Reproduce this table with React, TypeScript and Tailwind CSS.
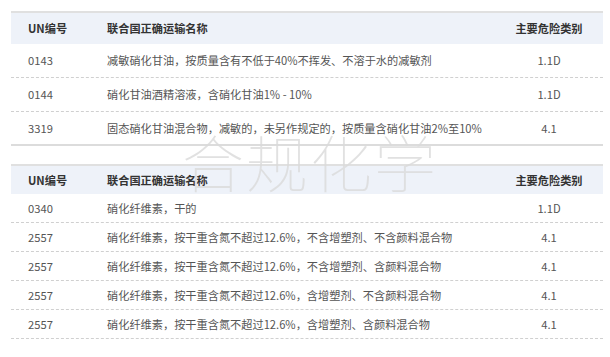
const font = { fontFamily: '"Noto Sans CJK SC", "Liberation Sans", sans-serif' };

type Row = { un: string; name: string; cls: string };

const first: Row[] = [
  { un: "0143", name: "减敏硝化甘油，按质量含有不低于40%不挥发、不溶于水的减敏剂", cls: "1.1D" },
  { un: "0144", name: "硝化甘油酒精溶液，含硝化甘油1% - 10%", cls: "1.1D" },
  { un: "3319", name: "固态硝化甘油混合物，减敏的，未另作规定的，按质量含硝化甘油2%至10%", cls: "4.1" },
];

const second: Row[] = [
  { un: "0340", name: "硝化纤维素，干的", cls: "1.1D" },
  { un: "2557", name: "硝化纤维素，按干重含氮不超过12.6%，不含增塑剂、不含颜料混合物", cls: "4.1" },
  { un: "2557", name: "硝化纤维素，按干重含氮不超过12.6%，不含增塑剂、含颜料混合物", cls: "4.1" },
  { un: "2557", name: "硝化纤维素，按干重含氮不超过12.6%，含增塑剂、不含颜料混合物", cls: "4.1" },
  { un: "2557", name: "硝化纤维素，按干重含氮不超过12.6%，含增塑剂、含颜料混合物", cls: "4.1" },
];

function Table({ rows, head, row, last }: { rows: Row[]; head: string; row: string; last: string }) {
  return (
    <div className="border-t-2 border-[#e0e0e0]">
      <div className={`flex items-center bg-[#eef2f9] font-bold text-[#333] ${head}`}>
        <div className="w-[79px] pl-[17px]">UN编号</div>
        <div className="flex-1 pl-[17px]">联合国正确运输名称</div>
        <div className="w-[108px] text-center">主要危险类别</div>
      </div>
      {rows.map((r, i) => (
        <div
          key={i}
          className={`flex items-center text-[#555] ${row} ${
            i === rows.length - 1 ? last : "border-b border-dashed border-[#d0d0d0]"
          }`}
        >
          <div className="w-[79px] pl-[17px]">{r.un}</div>
          <div className="flex-1 pl-[17px] whitespace-nowrap">{r.name}</div>
          <div className="w-[108px] text-center">{r.cls}</div>
        </div>
      ))}
    </div>
  );
}

export default function App() {
  return (
    <div className="relative w-[610px] h-[357px] bg-white text-[11.2px] overflow-hidden" style={font}>
      <div className="pt-[11px] px-[11px] pr-[7px] flex flex-col gap-[18px]">
        <Table rows={first} head="h-[31px]" row="h-[34px]" last="border-b-2 border-[#dcdcdc]" />
        <Table rows={second} head="h-[28px]" row="h-[29px]" last="border-b border-dashed border-[#d0d0d0]" />
      </div>
      {/* faint site watermark over both tables */}
      <div className="pointer-events-none absolute left-[182px] top-[130px] text-[62px] font-thin leading-none tracking-[2px] text-[#d9d9d9]/80">
        合规化学
      </div>
    </div>
  );
}
